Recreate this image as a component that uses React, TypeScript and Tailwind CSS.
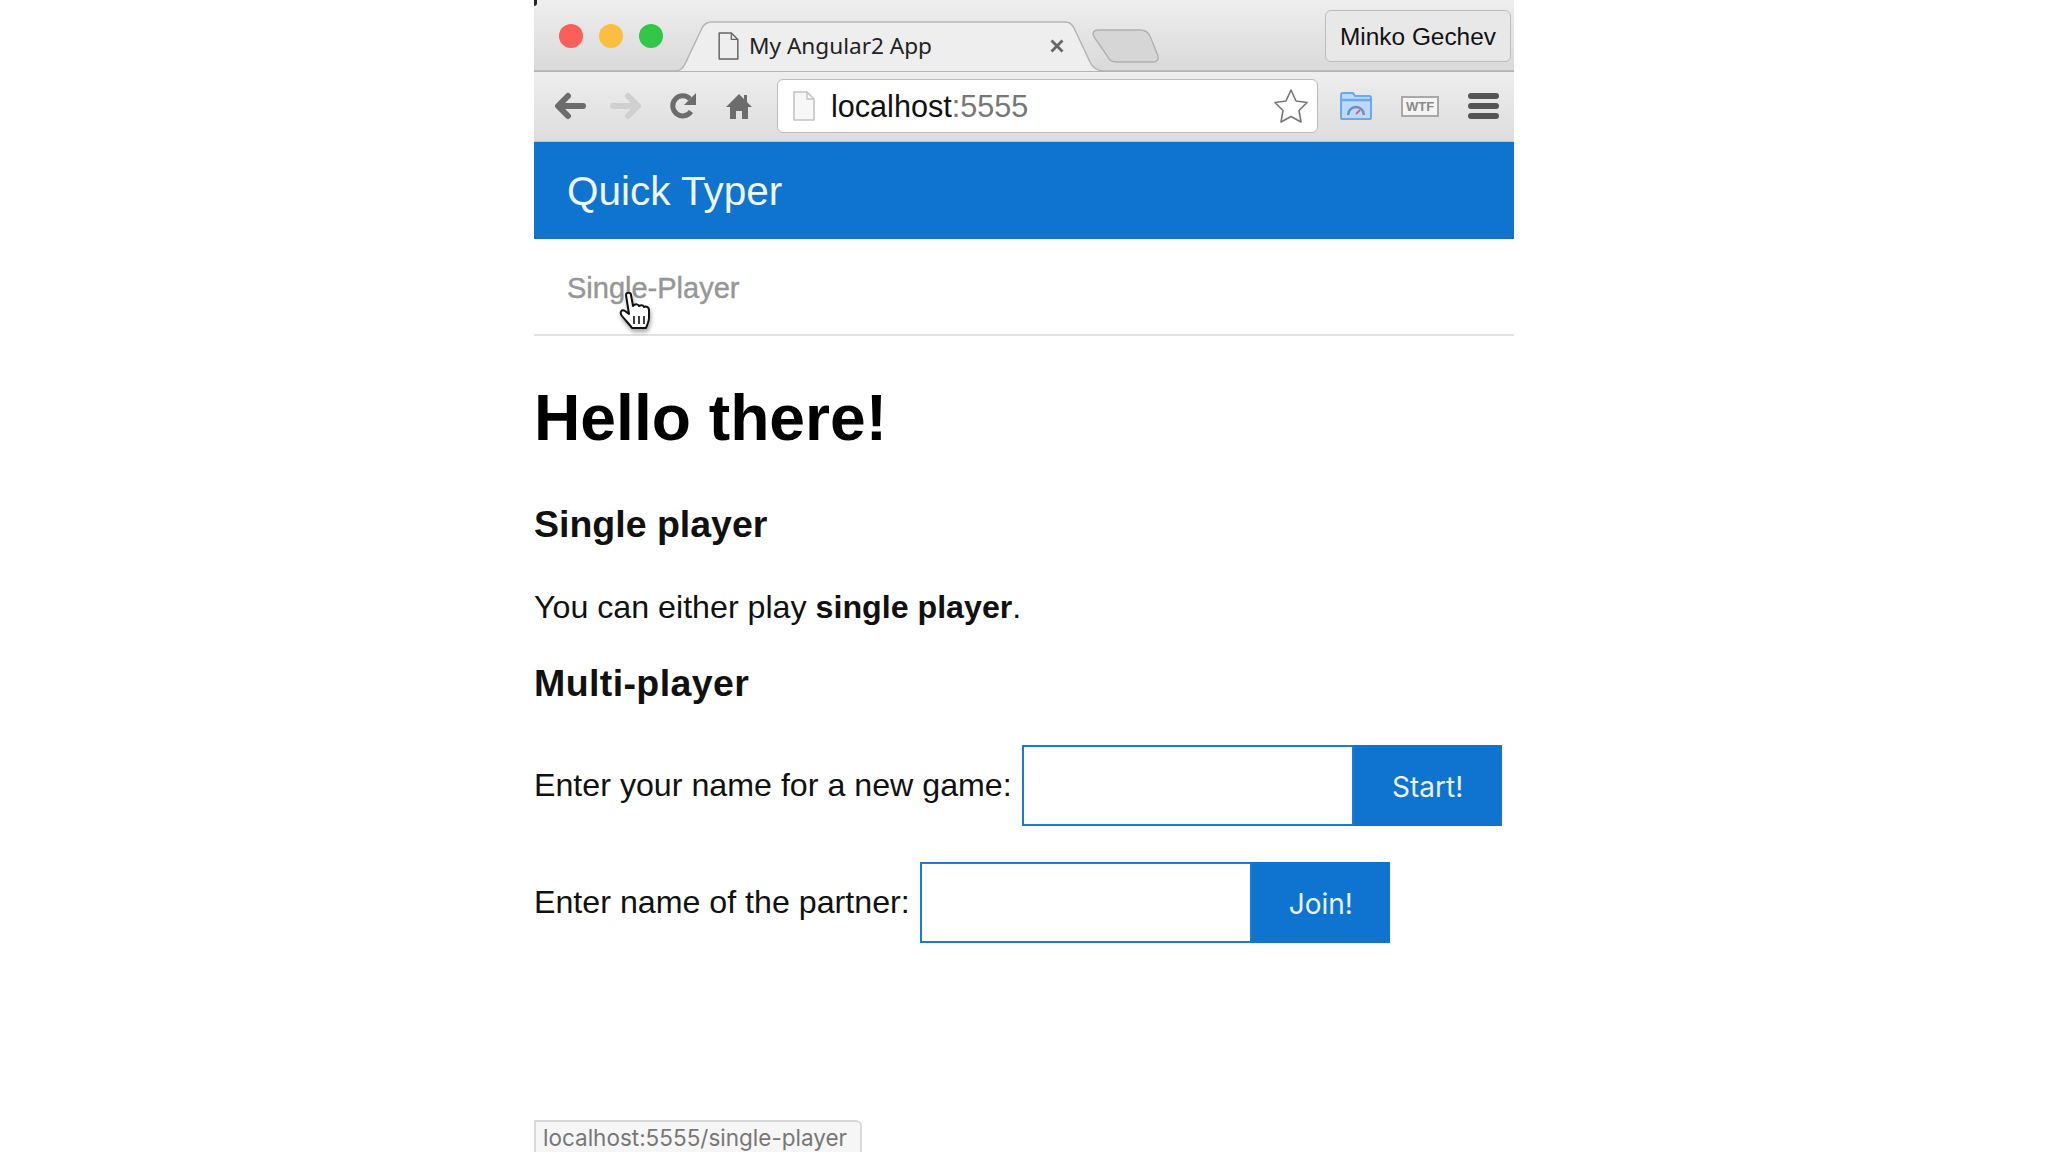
import { useState } from "react";

const blue = "bg-[#0e74cf]";

function DocIcon({ className, fill }: { className: string; fill: string }) {
  return (
    <svg viewBox="0 0 22 30" className={className}>
      <path d="M1 1h13l7 7v21H1z" fill={fill} stroke="currentColor" strokeWidth="1.6" strokeLinejoin="round" />
      <path d="M14 1v7h7" fill="none" stroke="currentColor" strokeWidth="1.4" />
    </svg>
  );
}

// tab outline, sits behind the strip's contents
function TabShape() {
  return (
    <svg viewBox="0 0 980 72" className="absolute left-0 top-0 h-[72px] w-[980px]">
      <path
        d="M0 71H140Q148 71 151 64L168 28Q171 22 178 22H531Q537 22 540 28L556 62Q560 71 570 71H980"
        fill="#eeeeee"
        stroke="#b4b4b4"
        strokeWidth="1.5"
      />
      <path d="M0 72V71H980V72Z" fill="#b4b4b4" />
      <path
        d="M565 30H606Q613 30 616 36L624 56Q625 62 619 62H582Q576 62 574 57L560 37Q557 30 565 30Z"
        fill="#d6d6d6"
        stroke="#b0b0b0"
        strokeWidth="1.4"
      />
    </svg>
  );
}

function Toolbar() {
  return (
    <div className="flex h-[71px] items-center bg-gradient-to-b from-[#eeeeee] to-[#dddddd] border-b border-[#c4c4c4]">
      <svg viewBox="0 0 32 28" className="ml-[20px] h-[28px] w-[32px]">
        <path d="M29 14H5M14 4L4 14l10 10" fill="none" stroke="#6c6c6c" strokeWidth="6" strokeLinecap="round" strokeLinejoin="round" />
      </svg>
      <svg viewBox="0 0 32 28" className="ml-[24px] h-[28px] w-[32px]">
        <path d="M3 14h24M18 4l10 10-10 10" fill="none" stroke="#d0d0d0" strokeWidth="6" strokeLinecap="round" strokeLinejoin="round" />
      </svg>
      <svg viewBox="0 0 28 28" className="ml-[27px] h-[28px] w-[28px]">
        <path d="M22 19.5A10 10 0 1 1 21 7" fill="none" stroke="#6c6c6c" strokeWidth="5" />
        <path d="M27 1v12H15z" fill="#6c6c6c" />
      </svg>
      <svg viewBox="0 0 26 28" className="ml-[29px] h-[28px] w-[26px]">
        <path d="M13 2L0 15h4v12h6v-8h6v8h6V15h4l-5-5V3h-3v4z" fill="#6c6c6c" />
      </svg>
      <div className="ml-[25px] flex h-[54px] w-[541px] items-center rounded-[6px] border border-[#bdbdbd] bg-white pl-[15px] pr-[8px]">
        <DocIcon className="h-[30px] w-[22px] text-[#c4c4c4]" fill="#f7f7f7" />
        <span className="ml-[16px] font-['Liberation_Sans',sans-serif] text-[30.600px] leading-none text-[#111]">
          localhost<span className="text-[#777]">:5555</span>
        </span>
        <svg viewBox="0 0 36 36" className="ml-auto h-[36px] w-[36px]">
          <path
            d="M18 2l5 11 11 1.500-8 8 2 11.500-10-5.500-10 5.500 2-11.500-8-8 11-1.500z"
            fill="#fff"
            stroke="#777"
            strokeWidth="1.6"
            strokeLinejoin="round"
          />
        </svg>
      </div>
      <svg viewBox="0 0 32 28" className="ml-[22px] h-[28px] w-[32px]">
        <path d="M1 3a2 2 0 0 1 2-2h10l2 3h14a2 2 0 0 1 2 2v20a1 1 0 0 1-1 1H2a1 1 0 0 1-1-1z" fill="#bcd8fa" stroke="#6aa9f0" strokeWidth="2" />
        <path d="M2 8h28" stroke="#6aa9f0" strokeWidth="2.500" />
        <path d="M8 23a8 8 0 0 1 16 0" fill="none" stroke="#6f8fb5" strokeWidth="2.500" />
        <path d="M16 22l4-4" stroke="#d66a6a" strokeWidth="2" />
      </svg>
      <div className="ml-[29px] flex h-[21px] w-[38px] items-center justify-center border-2 border-[#a8a8a8] bg-[#f4f4f4] font-['Liberation_Sans',sans-serif] text-[13px] font-bold leading-none text-[#8a8a8a]">
        WTF
      </div>
      <div className="ml-[29px] flex w-[31px] flex-col gap-[4px]">
        <div className="h-[6px] rounded-full bg-[#555]" />
        <div className="h-[6px] rounded-full bg-[#555]" />
        <div className="h-[6px] rounded-full bg-[#555]" />
      </div>
    </div>
  );
}

function TabStrip() {
  return (
    <div className="relative h-[71px] bg-gradient-to-b from-[#eeeeee] to-[#d9d9d9]">
      <TabShape />
      <div className="absolute left-0 top-0 h-[6px] w-[3px] rounded-br-[3px] bg-[#222]" />
      <div className="relative flex h-full items-start">
        <div className="ml-[25px] mt-[24px] h-[24px] w-[24px] rounded-full bg-[#fc5f57]" />
        <div className="ml-[16px] mt-[24px] h-[24px] w-[24px] rounded-full bg-[#fdbd3e]" />
        <div className="ml-[16px] mt-[24px] h-[24px] w-[24px] rounded-full bg-[#33c748]" />
        <DocIcon className="ml-[55px] mt-[32px] h-[28px] w-[21px] text-[#666]" fill="none" />
        <span className="ml-[10px] mt-[32px] font-['Noto_Sans',sans-serif] text-[22.600px] leading-[28px] text-[#222]">
          My Angular2 App
        </span>
        <svg viewBox="0 0 14 14" className="ml-[118px] mt-[39px] h-[14px] w-[14px]">
          <path d="M1.500 1.500l11 11M12.500 1.500l-11 11" stroke="#666" strokeWidth="2.800" />
        </svg>
        <div className="ml-auto mr-[3px] mt-[10px] flex h-[52px] w-[186px] items-center justify-center rounded-[6px] border border-[#bcbcbc] bg-[#e8e8e8] pt-[3px] font-['Liberation_Sans',sans-serif] text-[24.400px] text-[#111]">
          Minko Gechev
        </div>
      </div>
    </div>
  );
}

function GameRow({ label, action, className }: { label: string; action: string; className: string }) {
  const [name, setName] = useState("");
  return (
    <div className={`flex items-center ${className}`}>
      <label className="text-[32.200px] leading-none text-[#111]">{label}</label>
      <input
        value={name}
        onChange={(e) => setName(e.target.value)}
        className="ml-[10px] h-[81px] w-[332px] border-2 border-[#1a7bd4] bg-white outline-none"
      />
      <button className={`flex h-[81px] items-center justify-center font-['Inter',sans-serif] text-[28px] text-[#e8f3fc] ${blue} ${action === "Start!" ? "w-[148px]" : "w-[138px]"}`}>
        <span className="mt-[3px]">{action}</span>
      </button>
    </div>
  );
}

function HandCursor() {
  return (
    <svg viewBox="0 0 32 38" className="absolute left-[85px] top-[292px] h-[38px] w-[32px] drop-shadow-[1px_3px_2px_rgba(0,0,0,0.35)]">
      <path
        d="M7 3c0-3 5-3 5 0l2 11 1-1c2-1 4-1 5 1 2-1 4-1 5 1 2-1 5 0 5 3v8c0 4-2 7-3 10H13c-2-3-6-7-10-12-3-4 0-7 3-5l4 3z"
        fill="#fff"
        stroke="#111"
        strokeWidth="2"
        strokeLinejoin="round"
      />
      <path d="M15 24v8M20 24v8M25 24v8" stroke="#111" strokeWidth="1.600" />
    </svg>
  );
}

export default function App() {
  return (
    <div className="h-screen overflow-hidden bg-white font-['Liberation_Sans',sans-serif]">
      <div className="relative ml-[534px] h-full w-[980px]">
        <TabStrip />
        <Toolbar />
        <div className={`flex h-[97px] items-center pl-[33px] pt-[2px] text-[40.500px] text-[#eef6fc] ${blue}`}>Quick Typer</div>
        <nav className="flex h-[97px] items-center border-b-2 border-[#e2e2e2] pl-[33px] pt-[4px] text-[29px] text-[#969696] [-webkit-text-stroke:0.4px_#969696]">
          Single-Player
        </nav>
        <HandCursor />

        <h1 className="mt-[50px] text-[64.200px] font-bold leading-[64px] text-black">Hello there!</h1>
        <h3 className="mt-[54px] text-[37.500px] font-bold leading-[40px] text-[#111]">Single player</h3>
        <p className="mt-[43px] text-[32.200px] leading-[40px] text-[#111]">
          You can either play <b>single player</b>.
        </p>
        <h3 className="mt-[36px] text-[37.500px] font-bold leading-[40px] tracking-[0.4px] text-[#111]">Multi-player</h3>
        <GameRow label="Enter your name for a new game:" action="Start!" className="mt-[42px]" />
        <GameRow label="Enter name of the partner:" action="Join!" className="mt-[36px]" />

        <div className="absolute bottom-0 left-0 h-[32px] w-[328px] rounded-tr-[6px] border-l-2 border-r-2 border-t-2 border-[#d8d8d8] bg-[#f6f6f6] pl-[7px] font-['Inter',sans-serif] text-[22.500px] leading-[32px] text-[#777]">
          localhost:5555/single-player
        </div>
      </div>
    </div>
  );
}
